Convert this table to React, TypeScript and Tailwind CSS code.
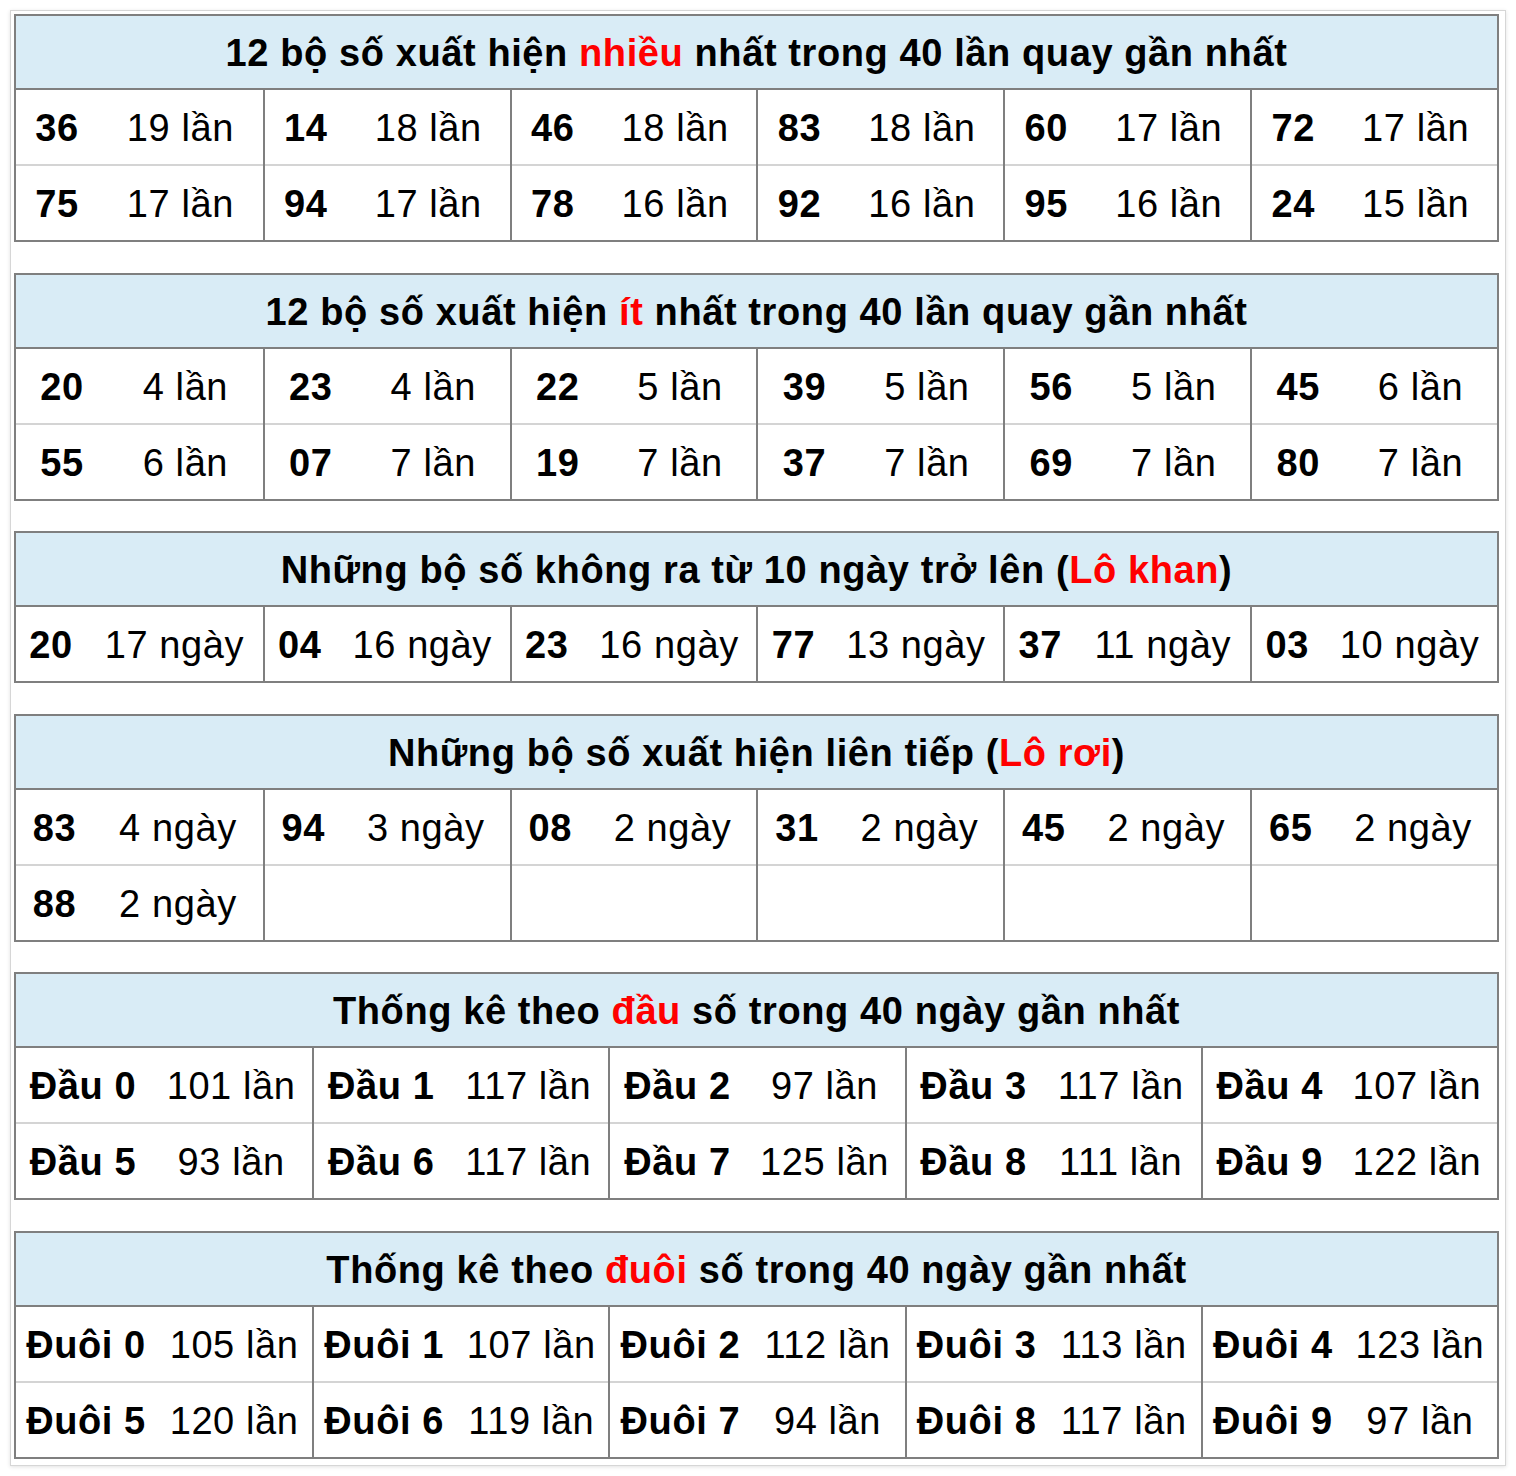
import type { ReactNode } from 'react';

type Cell = [string, string] | null;

type SectionProps = {
    title: ReactNode;
    cols: 5 | 6;
    numW: string;
    rows: Cell[][];
};

const Red = ({ children }: { children: ReactNode }) => <span className="text-[#ff0000]">{children}</span>;

const Section = ({ title, cols, numW, rows }: SectionProps) => {
    const groups = rows[0].map((_, g) => rows.map((r) => r[g]));

    return (
        <div className="border-2 border-[#7f7f7f]">
            {/* Header */}
            <div className="h-[74px] pt-[2px] bg-[#d9ecf6] border-b-2 border-[#7f7f7f] flex items-center justify-center font-bold">
                <span>{title}</span>
            </div>

            {/* Body: one column per group so the dark lines run straight down */}
            <div className={`grid ${cols === 6 ? 'grid-cols-6' : 'grid-cols-5'}`}>
                {groups.map((cells, g) => (
                    <div key={g} className={g > 0 ? 'border-l-2 border-[#7f7f7f]' : ''}>
                        {cells.map((cell, r) => (
                            <div
                                key={r}
                                className={`flex items-center pt-[2px] ${r > 0 ? 'h-[76px] border-t-2 border-[#d4d4d4]' : 'h-[74px]'}`}
                            >
                                {cell && (
                                    <>
                                        <div className={`${numW} shrink-0 text-center font-bold`}>{cell[0]}</div>
                                        <div className="flex-1 text-center whitespace-nowrap">{cell[1]}</div>
                                    </>
                                )}
                            </div>
                        ))}
                    </div>
                ))}
            </div>
        </div>
    );
};

const pairs = (list: string, suffix: string): Cell[] =>
    list.split(' ').map((p) => {
        const [a, b] = p.split(':');
        return [a, `${b} ${suffix}`];
    });

const App = () => {
    const most: Cell[][] = [
        pairs('36:19 14:18 46:18 83:18 60:17 72:17', 'lần'),
        pairs('75:17 94:17 78:16 92:16 95:16 24:15', 'lần'),
    ];
    const least: Cell[][] = [
        pairs('20:4 23:4 22:5 39:5 56:5 45:6', 'lần'),
        pairs('55:6 07:7 19:7 37:7 69:7 80:7', 'lần'),
    ];
    const khan: Cell[][] = [pairs('20:17 04:16 23:16 77:13 37:11 03:10', 'ngày')];
    const roi: Cell[][] = [
        pairs('83:4 94:3 08:2 31:2 45:2 65:2', 'ngày'),
        [['88', '2 ngày'], null, null, null, null, null],
    ];
    const dau: Cell[][] = [
        [['Đầu 0', '101 lần'], ['Đầu 1', '117 lần'], ['Đầu 2', '97 lần'], ['Đầu 3', '117 lần'], ['Đầu 4', '107 lần']],
        [['Đầu 5', '93 lần'], ['Đầu 6', '117 lần'], ['Đầu 7', '125 lần'], ['Đầu 8', '111 lần'], ['Đầu 9', '122 lần']],
    ];
    const duoi: Cell[][] = [
        [['Đuôi 0', '105 lần'], ['Đuôi 1', '107 lần'], ['Đuôi 2', '112 lần'], ['Đuôi 3', '113 lần'], ['Đuôi 4', '123 lần']],
        [['Đuôi 5', '120 lần'], ['Đuôi 6', '119 lần'], ['Đuôi 7', '94 lần'], ['Đuôi 8', '117 lần'], ['Đuôi 9', '97 lần']],
    ];

    return (
        <div
            className="min-h-screen bg-white p-[10px] text-black text-[38px] tracking-[0.6px] leading-none"
            style={{ fontFamily: '"Liberation Sans", Arial, sans-serif' }}
        >
            <div className="w-[1496px] border border-[#d6d6d6] shadow-[0_1px_4px_rgba(0,0,0,0.12)] pt-[3px] pl-[3px] pr-[6px] pb-[6px] flex flex-col gap-[30.6px]">
                <Section
                    title={<>12 bộ số xuất hiện <Red>nhiều</Red> nhất trong 40 lần quay gần nhất</>}
                    cols={6}
                    numW="w-[82px]"
                    rows={most}
                />
                <Section
                    title={<>12 bộ số xuất hiện <Red>ít</Red> nhất trong 40 lần quay gần nhất</>}
                    cols={6}
                    numW="w-[92px]"
                    rows={least}
                />
                <Section
                    title={<>Những bộ số không ra từ 10 ngày trở lên (<Red>Lô khan</Red>)</>}
                    cols={6}
                    numW="w-[70px]"
                    rows={khan}
                />
                <Section
                    title={<>Những bộ số xuất hiện liên tiếp (<Red>Lô rơi</Red>)</>}
                    cols={6}
                    numW="w-[77px]"
                    rows={roi}
                />
                <Section
                    title={<>Thống kê theo <Red>đầu</Red> số trong 40 ngày gần nhất</>}
                    cols={5}
                    numW="w-[134px]"
                    rows={dau}
                />
                <Section
                    title={<>Thống kê theo <Red>đuôi</Red> số trong 40 ngày gần nhất</>}
                    cols={5}
                    numW="w-[140px]"
                    rows={duoi}
                />
            </div>
        </div>
    );
};

export default App;
